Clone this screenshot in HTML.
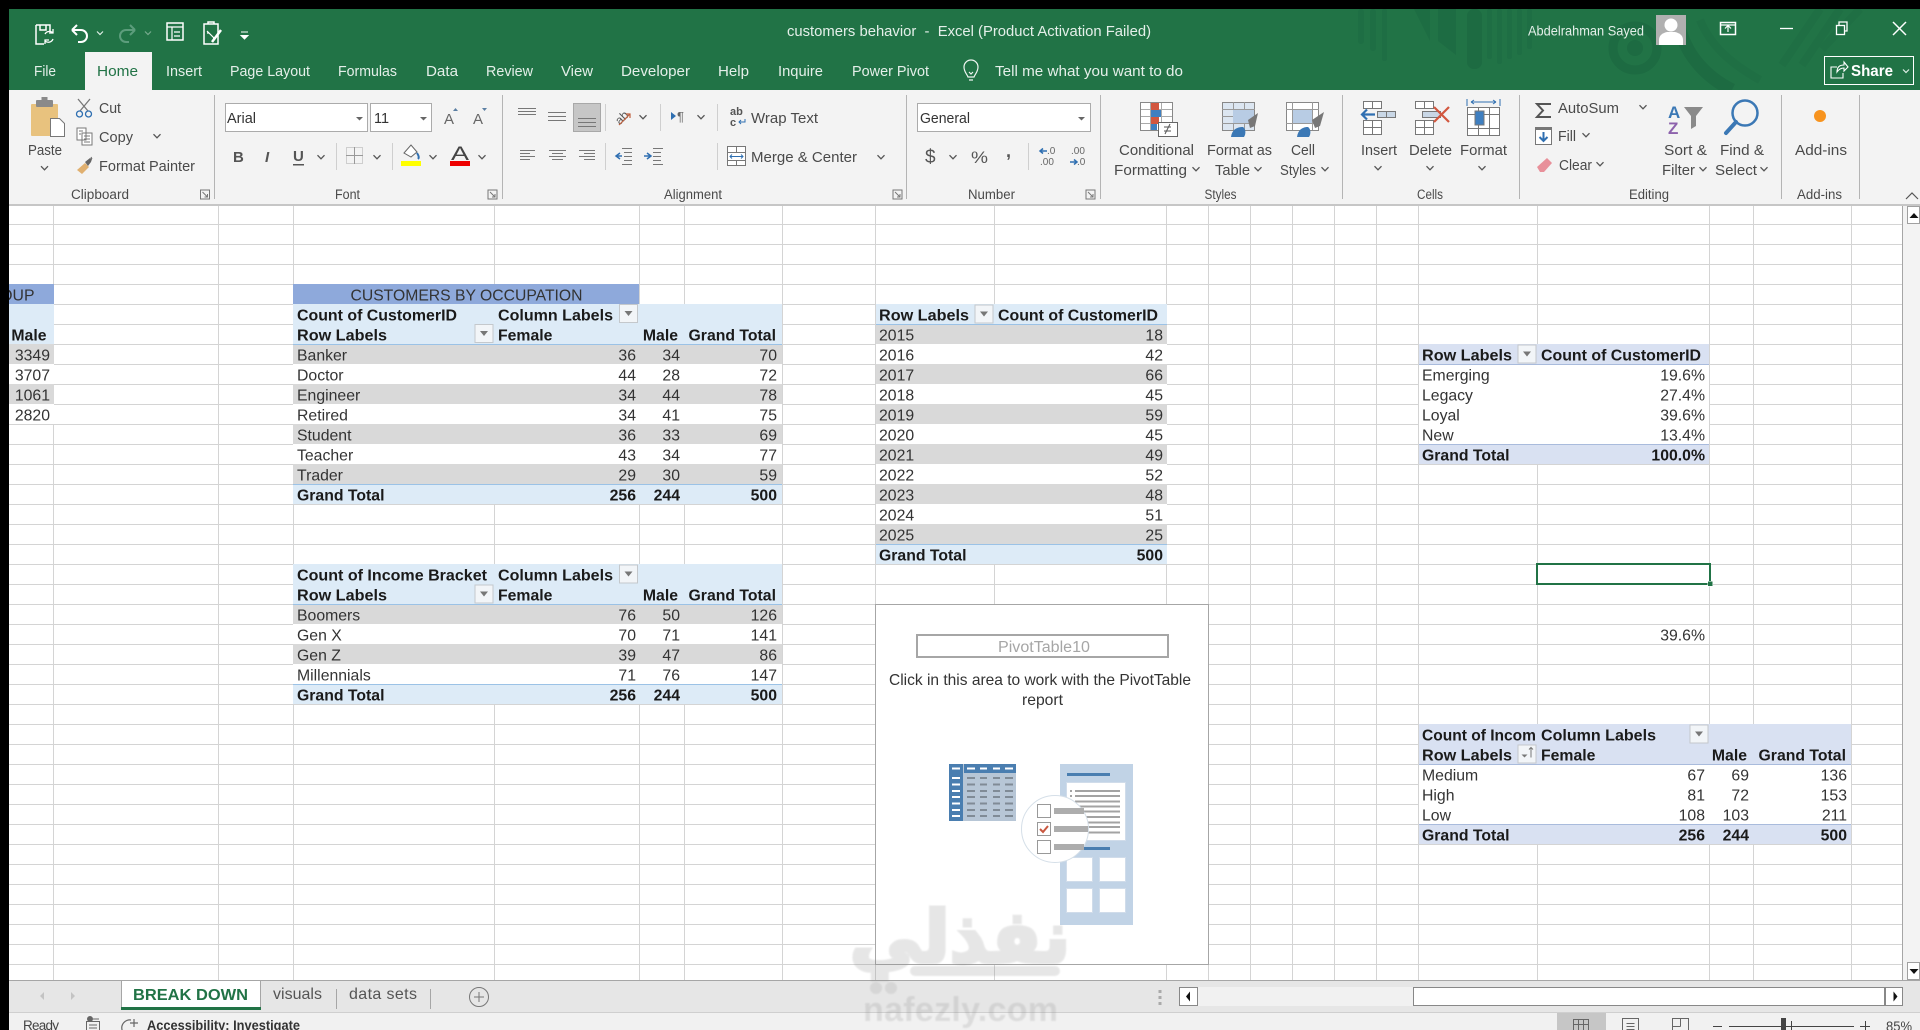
<!DOCTYPE html>
<html><head><meta charset="utf-8"><title>customers behavior - Excel</title>
<style>
html,body{margin:0;padding:0;background:#fff;width:1920px;height:1030px;overflow:hidden}
svg{display:block}
text{font-family:"Liberation Sans",Arial,sans-serif;white-space:pre}
.r{font-size:14.5px;fill:#4a4a4a}
.l{font-size:13.5px;fill:#4a4a4a}
.w{font-size:14.5px;fill:#e4efe9}
.c{font-size:15.8px;fill:#333;transform:translateY(.7px)}
.b{font-size:15.8px;font-weight:bold;fill:#1a1a1a;transform:translateY(.7px)}
.e{text-anchor:end}
.crisp{shape-rendering:crispEdges}
</style></head><body>
<svg xmlns="http://www.w3.org/2000/svg" width="1920" height="1030" viewBox="0 0 1920 1030">
<defs>
<path id="ch" d="M-3.5-1.8 0 1.8 3.5-1.8" fill="none" stroke="#555" stroke-width="1.3"/>
<path id="chw" d="M-3-1.5 0 1.5 3-1.5" fill="none" stroke="#dfeee6" stroke-width="1.2"/>
<g id="fb"><rect x=".5" y=".5" width="18" height="18" fill="#f2f5f8" stroke="#c4c8cc"/><path d="M5.5 7h8l-4 5z" fill="#777"/></g>
<path id="la" d="M0 0h9v9h-9z M2 2l5 5M7 4v3h-3" fill="none" stroke="#777"/>
</defs>

<!-- sheet background and gridlines -->
<rect x="0" y="205" width="1920" height="775" fill="#fff"/>
<path class="crisp" stroke="#d4d4d4" stroke-width="1" fill="none" d="M0 224.500H1902M0 244.500H1902M0 264.500H1902M0 284.500H1902M0 304.500H1902M0 324.500H1902M0 344.500H1902M0 364.500H1902M0 384.500H1902M0 404.500H1902M0 424.500H1902M0 444.500H1902M0 464.500H1902M0 484.500H1902M0 504.500H1902M0 524.500H1902M0 544.500H1902M0 564.500H1902M0 584.500H1902M0 604.500H1902M0 624.500H1902M0 644.500H1902M0 664.500H1902M0 684.500H1902M0 704.500H1902M0 724.500H1902M0 744.500H1902M0 764.500H1902M0 784.500H1902M0 804.500H1902M0 824.500H1902M0 844.500H1902M0 864.500H1902M0 884.500H1902M0 904.500H1902M0 924.500H1902M0 944.500H1902M0 964.500H1902
M53.500 205V980M218.500 205V980M293.500 205V980M494.500 205V980M639.500 205V980M684.500 205V980M782.500 205V980M875.500 205V980M994.500 205V980M1166.500 205V980M1208.500 205V980M1250.500 205V980M1292.500 205V980M1334.500 205V980M1376.500 205V980M1418.500 205V980M1537.500 205V980M1709.500 205V980M1753.500 205V980M1851.500 205V980"/>

<!-- left fragment -->
<g class="crisp">
<rect x="9" y="284" width="45" height="20" fill="#8ea9db"/>
<rect x="9" y="304" width="45" height="40" fill="#ddebf7"/>
<rect x="9" y="344" width="45" height="20" fill="#d9d9d9"/>
<rect x="9" y="364" width="45" height="20" fill="#fff"/>
<rect x="9" y="384" width="45" height="20" fill="#d9d9d9"/>
<rect x="9" y="404" width="45" height="20" fill="#fff"/>
</g>
<text class="c e" x="34.500" y="300">GROUP</text>
<text class="b e" x="46.500" y="340">Male</text>
<text class="c e" x="50" y="360">3349</text>
<text class="c e" x="50" y="380">3707</text>
<text class="c e" x="50" y="400">1061</text>
<text class="c e" x="50" y="420">2820</text>

<!-- occupation pivot -->
<g class="crisp">
<rect x="293" y="284" width="346" height="20" fill="#8ea9db"/>
<rect x="293" y="304" width="489" height="40" fill="#ddebf7"/>
<rect x="293" y="344" width="489" height="20" fill="#d9d9d9"/>
<rect x="293" y="364" width="489" height="20" fill="#fff"/>
<rect x="293" y="384" width="489" height="20" fill="#d9d9d9"/>
<rect x="293" y="404" width="489" height="20" fill="#fff"/>
<rect x="293" y="424" width="489" height="20" fill="#d9d9d9"/>
<rect x="293" y="444" width="489" height="20" fill="#fff"/>
<rect x="293" y="464" width="489" height="20" fill="#d9d9d9"/>
<rect x="293" y="484" width="489" height="20" fill="#ddebf7"/>
<path d="M293 344.500H782M293 484.500H782" stroke="#9bc2e6"/>
</g>
<text class="c" x="350.500" y="300" textLength="232" lengthAdjust="spacingAndGlyphs">CUSTOMERS BY OCCUPATION</text>
<text class="b" x="297" y="320" textLength="160" lengthAdjust="spacingAndGlyphs">Count of CustomerID</text>
<text class="b" x="498" y="320" textLength="115" lengthAdjust="spacingAndGlyphs">Column Labels</text>
<use href="#fb" x="619" y="304"/>
<text class="b" x="297" y="340" textLength="90" lengthAdjust="spacingAndGlyphs">Row Labels</text>
<use href="#fb" x="474.500" y="324"/>
<text class="b" x="498" y="340">Female</text>
<text class="b e" x="678" y="340">Male</text>
<text class="b e" x="776" y="340">Grand Total</text>
<text class="c" x="297" y="360">Banker</text><text class="c e" x="636" y="360">36</text><text class="c e" x="680" y="360">34</text><text class="c e" x="777" y="360">70</text>
<text class="c" x="297" y="380">Doctor</text><text class="c e" x="636" y="380">44</text><text class="c e" x="680" y="380">28</text><text class="c e" x="777" y="380">72</text>
<text class="c" x="297" y="400">Engineer</text><text class="c e" x="636" y="400">34</text><text class="c e" x="680" y="400">44</text><text class="c e" x="777" y="400">78</text>
<text class="c" x="297" y="420">Retired</text><text class="c e" x="636" y="420">34</text><text class="c e" x="680" y="420">41</text><text class="c e" x="777" y="420">75</text>
<text class="c" x="297" y="440">Student</text><text class="c e" x="636" y="440">36</text><text class="c e" x="680" y="440">33</text><text class="c e" x="777" y="440">69</text>
<text class="c" x="297" y="460">Teacher</text><text class="c e" x="636" y="460">43</text><text class="c e" x="680" y="460">34</text><text class="c e" x="777" y="460">77</text>
<text class="c" x="297" y="480">Trader</text><text class="c e" x="636" y="480">29</text><text class="c e" x="680" y="480">30</text><text class="c e" x="777" y="480">59</text>
<text class="b" x="297" y="500">Grand Total</text><text class="b e" x="636" y="500">256</text><text class="b e" x="680" y="500">244</text><text class="b e" x="777" y="500">500</text>

<!-- income bracket pivot -->
<g class="crisp">
<rect x="293" y="564" width="489" height="40" fill="#ddebf7"/>
<rect x="293" y="604" width="489" height="20" fill="#d9d9d9"/>
<rect x="293" y="624" width="489" height="20" fill="#fff"/>
<rect x="293" y="644" width="489" height="20" fill="#d9d9d9"/>
<rect x="293" y="664" width="489" height="20" fill="#fff"/>
<rect x="293" y="684" width="489" height="20" fill="#ddebf7"/>
<path d="M293 604.500H782M293 684.500H782" stroke="#9bc2e6"/>
</g>
<text class="b" x="297" y="580" textLength="190" lengthAdjust="spacingAndGlyphs">Count of Income Bracket</text>
<text class="b" x="498" y="580" textLength="115" lengthAdjust="spacingAndGlyphs">Column Labels</text>
<use href="#fb" x="619" y="564.500"/>
<text class="b" x="297" y="600" textLength="90" lengthAdjust="spacingAndGlyphs">Row Labels</text>
<use href="#fb" x="474.500" y="584.500"/>
<text class="b" x="498" y="600">Female</text>
<text class="b e" x="678" y="600">Male</text>
<text class="b e" x="776" y="600">Grand Total</text>
<text class="c" x="297" y="620">Boomers</text><text class="c e" x="636" y="620">76</text><text class="c e" x="680" y="620">50</text><text class="c e" x="777" y="620">126</text>
<text class="c" x="297" y="640">Gen X</text><text class="c e" x="636" y="640">70</text><text class="c e" x="680" y="640">71</text><text class="c e" x="777" y="640">141</text>
<text class="c" x="297" y="660">Gen Z</text><text class="c e" x="636" y="660">39</text><text class="c e" x="680" y="660">47</text><text class="c e" x="777" y="660">86</text>
<text class="c" x="297" y="680">Millennials</text><text class="c e" x="636" y="680">71</text><text class="c e" x="680" y="680">76</text><text class="c e" x="777" y="680">147</text>
<text class="b" x="297" y="700">Grand Total</text><text class="b e" x="636" y="700">256</text><text class="b e" x="680" y="700">244</text><text class="b e" x="777" y="700">500</text>

<!-- years pivot -->
<g class="crisp">
<rect x="876" y="304" width="291" height="20" fill="#ddebf7"/>
<rect x="876" y="324" width="291" height="20" fill="#d9d9d9"/>
<rect x="876" y="344" width="291" height="20" fill="#fff"/>
<rect x="876" y="364" width="291" height="20" fill="#d9d9d9"/>
<rect x="876" y="384" width="291" height="20" fill="#fff"/>
<rect x="876" y="404" width="291" height="20" fill="#d9d9d9"/>
<rect x="876" y="424" width="291" height="20" fill="#fff"/>
<rect x="876" y="444" width="291" height="20" fill="#d9d9d9"/>
<rect x="876" y="464" width="291" height="20" fill="#fff"/>
<rect x="876" y="484" width="291" height="20" fill="#d9d9d9"/>
<rect x="876" y="504" width="291" height="20" fill="#fff"/>
<rect x="876" y="524" width="291" height="20" fill="#d9d9d9"/>
<rect x="876" y="544" width="291" height="20" fill="#ddebf7"/>
<path d="M876 324.500H1167M876 544.500H1167" stroke="#9bc2e6"/>
</g>
<text class="b" x="879" y="320" textLength="90" lengthAdjust="spacingAndGlyphs">Row Labels</text>
<use href="#fb" x="974.500" y="304.500"/>
<text class="b" x="998" y="320" textLength="160" lengthAdjust="spacingAndGlyphs">Count of CustomerID</text>
<text class="c" x="879" y="340">2015</text><text class="c e" x="1163" y="340">18</text>
<text class="c" x="879" y="360">2016</text><text class="c e" x="1163" y="360">42</text>
<text class="c" x="879" y="380">2017</text><text class="c e" x="1163" y="380">66</text>
<text class="c" x="879" y="400">2018</text><text class="c e" x="1163" y="400">45</text>
<text class="c" x="879" y="420">2019</text><text class="c e" x="1163" y="420">59</text>
<text class="c" x="879" y="440">2020</text><text class="c e" x="1163" y="440">45</text>
<text class="c" x="879" y="460">2021</text><text class="c e" x="1163" y="460">49</text>
<text class="c" x="879" y="480">2022</text><text class="c e" x="1163" y="480">52</text>
<text class="c" x="879" y="500">2023</text><text class="c e" x="1163" y="500">48</text>
<text class="c" x="879" y="520">2024</text><text class="c e" x="1163" y="520">51</text>
<text class="c" x="879" y="540">2025</text><text class="c e" x="1163" y="540">25</text>
<text class="b" x="879" y="560">Grand Total</text><text class="b e" x="1163" y="560">500</text>

<!-- segment pivot -->
<g class="crisp">
<rect x="1419" y="344" width="290" height="20" fill="#d9e1f2"/>
<rect x="1419" y="364" width="290" height="80" fill="#fff"/>
<rect x="1419" y="444" width="290" height="20" fill="#d9e1f2"/>
<path d="M1419 364.500H1709M1419 444.500H1709" stroke="#a9bbdc"/>
</g>
<text class="b" x="1422" y="360" textLength="90" lengthAdjust="spacingAndGlyphs">Row Labels</text>
<use href="#fb" x="1517.500" y="344.500"/>
<text class="b" x="1541" y="360" textLength="160" lengthAdjust="spacingAndGlyphs">Count of CustomerID</text>
<text class="c" x="1422" y="380">Emerging</text><text class="c e" x="1705" y="380">19.6%</text>
<text class="c" x="1422" y="400">Legacy</text><text class="c e" x="1705" y="400">27.4%</text>
<text class="c" x="1422" y="420">Loyal</text><text class="c e" x="1705" y="420">39.6%</text>
<text class="c" x="1422" y="440">New</text><text class="c e" x="1705" y="440">13.4%</text>
<text class="b" x="1422" y="460">Grand Total</text><text class="b e" x="1705" y="460">100.0%</text>

<!-- selected cell -->
<rect class="crisp" x="1537" y="564" width="173" height="20" fill="#fff" stroke="#217346" stroke-width="2"/>
<rect class="crisp" x="1707.500" y="581" width="5" height="5" fill="#217346" stroke="#fff" stroke-width=".5"/>
<text class="c e" x="1705" y="640">39.6%</text>

<!-- income pivot right -->
<g class="crisp">
<rect x="1419" y="724" width="432" height="40" fill="#d9e1f2"/>
<rect x="1419" y="764" width="432" height="60" fill="#fff"/>
<rect x="1419" y="824" width="432" height="20" fill="#d9e1f2"/>
<path d="M1419 764.500H1851M1419 824.500H1851" stroke="#a9bbdc"/>
</g>
<text class="b" x="1422" y="740" textLength="114" lengthAdjust="spacingAndGlyphs">Count of Incom</text>
<text class="b" x="1541" y="740" textLength="115" lengthAdjust="spacingAndGlyphs">Column Labels</text>
<use href="#fb" x="1689.500" y="724.500"/>
<text class="b" x="1422" y="760" textLength="90" lengthAdjust="spacingAndGlyphs">Row Labels</text>
<g transform="translate(1517.500 744.500)"><rect x=".5" y=".5" width="18" height="18" fill="#f2f5f8" stroke="#c4c8cc"/><path d="M4 10h6l-3 3z" fill="#777"/><path d="M13.500 3v10M11.500 5l2-2 2 2" fill="none" stroke="#777"/></g>
<text class="b" x="1541" y="760">Female</text>
<text class="b e" x="1747" y="760">Male</text>
<text class="b e" x="1846" y="760">Grand Total</text>
<text class="c" x="1422" y="780">Medium</text><text class="c e" x="1705" y="780">67</text><text class="c e" x="1749" y="780">69</text><text class="c e" x="1847" y="780">136</text>
<text class="c" x="1422" y="800">High</text><text class="c e" x="1705" y="800">81</text><text class="c e" x="1749" y="800">72</text><text class="c e" x="1847" y="800">153</text>
<text class="c" x="1422" y="820">Low</text><text class="c e" x="1705" y="820">108</text><text class="c e" x="1749" y="820">103</text><text class="c e" x="1847" y="820">211</text>
<text class="b" x="1422" y="840">Grand Total</text><text class="b e" x="1705" y="840">256</text><text class="b e" x="1749" y="840">244</text><text class="b e" x="1847" y="840">500</text>

<!-- placeholder pivot -->
<rect class="crisp" x="875.500" y="604.500" width="333" height="360" fill="#fff" stroke="#a6a6a6"/>
<rect class="crisp" x="917" y="635" width="251" height="22" fill="#fff" stroke="#a6a6a6" stroke-width="2"/>
<text x="998" y="652" style="font-size:15.5px;fill:#a6a6a6" textLength="92" lengthAdjust="spacingAndGlyphs">PivotTable10</text>
<text x="889" y="685" style="font-size:15.8px;fill:#333" textLength="302" lengthAdjust="spacingAndGlyphs">Click in this area to work with the PivotTable</text>
<text x="1022" y="705" style="font-size:15.8px;fill:#333" textLength="41" lengthAdjust="spacingAndGlyphs">report</text>
<!-- illustration -->
<g class="crisp">
<rect x="949" y="764" width="67" height="57" fill="#b7c6d6"/>
<rect x="949" y="764" width="14" height="57" fill="#4a7eb0"/>
<rect x="964" y="764" width="52" height="9" fill="#4a7eb0"/>
<path stroke="#fff" stroke-width="2" d="M952 768.500h8M967 768.500h8M980 768.500h7M993 768.500h7M1005 768.500h8M952 778h8M952 784.500h8M952 791h8M952 797h8M952 803.500h8M952 810h8M952 816h8"/>
<path stroke="#808b96" stroke-width="2" d="M967 778h8M980 778h7M993 778h7M1005 778h8M967 784.500h8M980 784.500h7M993 784.500h7M1005 784.500h8M967 791h8M980 791h7M993 791h7M1005 791h8M967 797h8M980 797h7M993 797h7M1005 797h8M967 803.500h8M980 803.500h7M993 803.500h7M1005 803.500h8M967 810h8M980 810h7M993 810h7M1005 810h8M967 816h8M980 816h7M993 816h7M1005 816h8"/>
<rect x="1060" y="764" width="73" height="161" fill="#c1d3e6"/>
<rect x="1067" y="773" width="43" height="3" fill="#4a7eb0"/>
<rect x="1066.500" y="782.500" width="59" height="58" fill="#fff" stroke="#d0dcea"/>
<path stroke="#a3a3a3" stroke-width="2" d="M1075 791h45M1075 796h45M1075 801.500h45M1075 806.500h45M1075 811.500h45M1075 817h45M1075 822.500h45M1075 827h45M1075 832.500h45M1070 791h2M1070 796h2M1070 801h2"/>
<rect x="1067" y="847" width="43" height="3" fill="#4a7eb0"/>
<rect x="1066.500" y="857.500" width="26" height="24" fill="#fff" stroke="#d0dcea"/>
<rect x="1099.500" y="857.500" width="26" height="24" fill="#fff" stroke="#d0dcea"/>
<rect x="1066.500" y="888.500" width="26" height="24" fill="#fff" stroke="#d0dcea"/>
<rect x="1099.500" y="888.500" width="26" height="24" fill="#fff" stroke="#d0dcea"/>
</g>
<circle cx="1055" cy="829" r="33.500" fill="#fff" stroke="#d5dfe8"/>
<rect x="1037.500" y="804.500" width="13" height="13" fill="#fff" stroke="#999"/>
<rect x="1037.500" y="822.500" width="13" height="13" fill="#fff" stroke="#999"/>
<rect x="1037.500" y="840.500" width="13" height="13" fill="#fff" stroke="#999"/>
<path d="M1040 829l3 3 5-6" fill="none" stroke="#c9573f" stroke-width="2"/>
<rect x="1054" y="808" width="30" height="6" fill="#adadad"/>
<rect x="1054" y="826" width="34" height="6" fill="#adadad"/>
<rect x="1054" y="844" width="30" height="6" fill="#adadad"/>

<!-- right of grid -->
<rect class="crisp" x="1902" y="205" width="1" height="775" fill="#a6a6a6"/>
<rect class="crisp" x="1903" y="205" width="17" height="775" fill="#f3f3f3"/>
<rect class="crisp" x="1907.500" y="206.500" width="12" height="17" fill="#fff" stroke="#a0a0a0"/>
<path d="M1914 213l4.500 5h-9z" fill="#111"/>
<rect class="crisp" x="1907.500" y="962.500" width="12" height="17" fill="#fff" stroke="#a0a0a0"/>
<path d="M1914 974l4.500-5h-9z" fill="#111"/>

<!-- sheet bar -->
<rect class="crisp" x="0" y="980" width="1920" height="32" fill="#e6e6e6"/>
<rect class="crisp" x="0" y="980" width="1920" height="1" fill="#a6a6a6"/>
<rect class="crisp" x="0" y="1012" width="1920" height="1" fill="#cfcfcf"/>
<rect class="crisp" x="0" y="1013" width="1920" height="17" fill="#f1f1f1"/>
<path d="M44 992l-4 4 4 4z M71 992l4 4-4 4z" fill="#c3c3c3"/>
<path class="crisp" d="M121.500 1008V980.500H260.500V1008" fill="#fff" stroke="#a6a6a6"/>
<rect class="crisp" x="122" y="981" width="138" height="28" fill="#fff"/>
<rect class="crisp" x="121" y="1007" width="140" height="3" fill="#217346"/>
<text x="133" y="1000" style="font-size:16px;font-weight:bold;fill:#217346" textLength="115" lengthAdjust="spacingAndGlyphs">BREAK DOWN</text>
<text x="273" y="999" style="font-size:16px;fill:#555" textLength="49" lengthAdjust="spacing">visuals</text>
<rect class="crisp" x="336" y="989" width="1" height="20" fill="#a6a6a6"/>
<text x="349" y="999" style="font-size:16px;fill:#555" textLength="68" lengthAdjust="spacing">data sets</text>
<rect class="crisp" x="430" y="989" width="1" height="20" fill="#a6a6a6"/>
<circle cx="479" cy="997" r="9.500" fill="none" stroke="#777"/>
<path d="M474 997h10M479 992v10" stroke="#777"/>
<path class="crisp" d="M1160 990v3M1160 996v3M1160 1002v3" stroke="#aaa" stroke-width="3"/>
<rect class="crisp" x="1197" y="987" width="216" height="19" fill="#f1f1f1"/>
<rect class="crisp" x="1179.500" y="987.500" width="18" height="18" fill="#fff" stroke="#888"/>
<path d="M1186 996.500l4-5v10z" fill="#111"/>
<rect class="crisp" x="1413.500" y="987.500" width="471" height="18" fill="#fff" stroke="#888"/>
<rect class="crisp" x="1885.500" y="987.500" width="17" height="18" fill="#fff" stroke="#888"/>
<path d="M1897.500 996.500l-4-5v10z" fill="#111"/>

<!-- status bar -->
<text x="23" y="1030" style="font-size:13.5px;fill:#444" textLength="36">Ready</text>
<g fill="none" stroke="#666"><rect x="86.500" y="1021.500" width="13" height="10"/><path d="M89 1025h8M89 1028h8"/><circle cx="90" cy="1019" r="2.500" fill="#666"/><path d="M93 1019h6"/></g>
<path d="M131 1020a8 8 0 1 0 4 14M134 1019v8M130 1023h8" fill="none" stroke="#666" stroke-width="1.200"/>
<text x="147" y="1030" style="font-size:13.5px;font-weight:bold;fill:#333" textLength="153" lengthAdjust="spacingAndGlyphs">Accessibility: Investigate</text>
<rect class="crisp" x="1557" y="1013" width="49" height="17" fill="#c6c6c6"/>
<path class="crisp" d="M1573.500 1019.500h15v11h-15zM1578.500 1019.500v11M1583.500 1019.500v11M1573.500 1024.500h15" fill="none" stroke="#666"/>
<path class="crisp" d="M1622.500 1018.500h16v12h-16zM1626.500 1023.500h8M1626.500 1026.500h8M1626.500 1029.500h8" fill="none" stroke="#666"/>
<path class="crisp" d="M1672.500 1018.500h16v12h-16zM1680.500 1018.500v8M1672.500 1026.500h8" fill="none" stroke="#666"/>
<path class="crisp" d="M1713 1026.500h9M1729 1026.500h125M1860 1026.500h10M1865.500 1021v9M1791.500 1021v9" stroke="#444" fill="none"/>
<rect class="crisp" x="1781" y="1018" width="5" height="12" fill="#444"/>
<text x="1886" y="1031" style="font-size:14px;fill:#444" textLength="26" lengthAdjust="spacingAndGlyphs">85%</text>

<!-- title bar / tabs -->
<rect class="crisp" x="0" y="9" width="1920" height="81" fill="#217346"/>
<g fill="#1d6b42">
<rect x="1358" y="9" width="6" height="35" rx="3" opacity=".6"/><rect x="1370" y="9" width="6" height="42" rx="3" opacity=".6"/><rect x="1382" y="9" width="5" height="52" rx="2" opacity=".6"/>
<path d="M1414 9h16v32z" opacity=".7"/>
<path d="M1438 9h18v46l-18-14z" opacity=".9"/>
<rect x="1467" y="9" width="15" height="60" rx="7"/>
<rect x="1487" y="9" width="5" height="50" rx="2" opacity=".6"/><rect x="1497" y="9" width="5" height="55" rx="2" opacity=".6"/><rect x="1507" y="9" width="5" height="50" rx="2" opacity=".6"/><rect x="1517" y="9" width="5" height="46" rx="2" opacity=".6"/><rect x="1527" y="9" width="5" height="40" rx="2" opacity=".6"/>
</g>
<circle cx="1635" cy="48" r="22" fill="none" stroke="#1d6b42" stroke-width="9"/>
<circle cx="1635" cy="48" r="8" fill="#1d6b42"/>
<path d="M1680 30c8 28 28 48 52 60" fill="none" stroke="#1d6b42" stroke-width="13"/>
<path d="M1700 20c10 24 28 42 60 60M1820 9l-38 56M1840 9l-38 56M1860 9l-38 40" fill="none" stroke="#1d6b42" stroke-width="8" opacity=".5"/>

<!-- QAT -->
<g fill="none" stroke="#fff" stroke-width="1.500">
<path d="M36 25h14v7M36 25v19h8M40 25v5h6v-5"/><path d="M45 34a5 5 0 0 1 8-1M53 39a5 5 0 0 1-8 2M53 29v4h-4M45 44v-4h4" stroke-width="1.300"/>
<path d="M72 30h9a6 6 0 0 1 0 12h-3M72 30l5-5M72 30l5 5" stroke-width="2"/>
<path d="M135 30h-9a6 6 0 0 0 0 12h3M135 30l-5-5M135 30l-5 5" stroke="#5c9d7c" stroke-width="2"/>
<rect x="167" y="23" width="16" height="17"/><path d="M167 27h16M172 27v13M174 32h6M174 36h6" stroke-width="1.200"/>
<rect x="204" y="24" width="14" height="20"/><path d="M208 24v-2h6v2" /><path d="M207 31l8 8M207 33h2M213 38h2" stroke-width="1.200"/><path d="M212 42l9-12" stroke-width="2.500"/>
</g>
<use href="#chw" x="100" y="33"/><g opacity=".45"><use href="#chw" x="148" y="33"/></g>
<path d="M241 32h7M241 35.500l3.500 3.500 3.500-3.500z" fill="#fff" stroke="#fff"/>

<text class="w" x="787" y="36" textLength="364" lengthAdjust="spacingAndGlyphs" style="font-size:15px">customers behavior  -  Excel (Product Activation Failed)</text>

<rect class="crisp" x="85" y="52" width="67" height="38" fill="#f3f3f3"/>
<text class="w" x="34" y="76" textLength="22" lengthAdjust="spacingAndGlyphs">File</text>
<text x="97" y="76" style="font-size:14.5px;fill:#217346" textLength="41" lengthAdjust="spacingAndGlyphs">Home</text>
<text class="w" x="166" y="76" textLength="36" lengthAdjust="spacingAndGlyphs">Insert</text>
<text class="w" x="230" y="76" textLength="80" lengthAdjust="spacingAndGlyphs">Page Layout</text>
<text class="w" x="338" y="76" textLength="59" lengthAdjust="spacingAndGlyphs">Formulas</text>
<text class="w" x="426" y="76" textLength="32" lengthAdjust="spacingAndGlyphs">Data</text>
<text class="w" x="486" y="76" textLength="47" lengthAdjust="spacingAndGlyphs">Review</text>
<text class="w" x="561" y="76" textLength="32" lengthAdjust="spacingAndGlyphs">View</text>
<text class="w" x="621" y="76" textLength="69" lengthAdjust="spacingAndGlyphs">Developer</text>
<text class="w" x="718" y="76" textLength="31" lengthAdjust="spacingAndGlyphs">Help</text>
<text class="w" x="778" y="76" textLength="45" lengthAdjust="spacingAndGlyphs">Inquire</text>
<text class="w" x="852" y="76" textLength="77" lengthAdjust="spacingAndGlyphs">Power Pivot</text>
<path d="M968 77c-1-3-4-5-4-10a7 7 0 0 1 14 0c0 5-3 7-4 10zM969 80h4M969 72l2 2 2-2" fill="none" stroke="#eef5f1" stroke-width="1.200"/>
<text class="w" x="995" y="76" textLength="188" lengthAdjust="spacingAndGlyphs">Tell me what you want to do</text>

<text class="w" x="1528" y="35.500" textLength="116" lengthAdjust="spacingAndGlyphs" style="font-size:14px">Abdelrahman Sayed</text>
<rect class="crisp" x="1656" y="15" width="30" height="30" fill="#b0b0b0"/>
<circle cx="1671" cy="25" r="6.500" fill="#fff"/><path d="M1659 45v-5c0-5 4-7 8-8h8c4 1 8 3 8 8v5z" fill="#fff"/>
<g fill="none" stroke="#fff">
<rect x="1720.500" y="22.500" width="15" height="12" stroke-width="1.500"/><path d="M1728 32v-6M1725 28.500l3-3 3 3M1720 25h16" stroke-width="1.200"/>
<path d="M1780 28.500h13" stroke-width="1.300"/>
<rect x="1836.500" y="25.500" width="8" height="9" stroke-width="1.300"/><path d="M1839 25v-3h8v9h-2" stroke-width="1.300"/>
<path d="M1893 22l13 13M1906 22l-13 13" stroke-width="1.500"/>
<rect class="crisp" x="1824.500" y="56.500" width="89" height="28"/>
<path d="M1837 67h-6v11h12v-5M1837 72c0-5 3-7 7-7v-3l4 5-4 4v-3c-3 0-5 1-7 4z" stroke-width="1.100"/>
</g>
<text x="1851" y="76" style="font-size:16px;font-weight:bold;fill:#fff" textLength="42" lengthAdjust="spacingAndGlyphs">Share</text>
<use href="#chw" x="1906" y="71"/>

<!-- ribbon -->
<rect class="crisp" x="0" y="90" width="1920" height="114" fill="#f3f3f3"/>
<rect class="crisp" x="0" y="204" width="1920" height="2" fill="#c6c6c6"/>
<rect class="crisp" x="85" y="88" width="67" height="3" fill="#f3f3f3"/>
<path class="crisp" stroke="#b4b4b4" d="M214.500 95V199M502.500 95V199M906.500 95V199M1100.500 95V199M1342.500 95V199M1519.500 95V199M1781.500 95V199M1859.500 95V199"/>
<path class="crisp" stroke="#cfcfcf" d="M336.500 143V170M392.500 143V170M605.500 104V131M605.500 143V170M660.500 104V131M717.500 104V131M717.500 143V170M1028.500 143V170"/>

<!-- clipboard group -->
<rect x="31" y="104" width="27" height="32" rx="1" fill="#e8c27e"/>
<rect x="36" y="100" width="17" height="7" rx="1" fill="#8a8a8a"/><rect x="41.500" y="97" width="6" height="4" fill="#8a8a8a"/>
<path d="M50.500 118.500h9l5 5v13h-14z" fill="#fff" stroke="#777"/>
<text class="r" x="28" y="155" textLength="34" lengthAdjust="spacingAndGlyphs">Paste</text>
<use href="#ch" x="44.500" y="168"/>
<g fill="none" stroke="#777" stroke-width="1.300"><path d="M78 99l10 12M90 99l-10 12"/></g>
<g fill="none" stroke="#2f6fb1" stroke-width="1.300"><circle cx="79.500" cy="114" r="3"/><circle cx="88.500" cy="114" r="3"/></g>
<text class="r" x="99" y="113" textLength="22" lengthAdjust="spacingAndGlyphs">Cut</text>
<path d="M77 128h9v12h-9zM82 133h10v12H82zM79 131h4M79 134h2M84 136h6M84 139h6M84 142h6" fill="#fff" stroke="#777"/>
<text class="r" x="99" y="142" textLength="34" lengthAdjust="spacingAndGlyphs">Copy</text>
<use href="#ch" x="157" y="136"/>
<path d="M77 170l8-7 4 4-7 7z" fill="#e0b070"/><path d="M85 162l5-4 2 1-1 3-3 4z" fill="#666"/><path d="M91 157l1 2" stroke="#666"/>
<text class="r" x="99" y="171" textLength="96" lengthAdjust="spacingAndGlyphs">Format Painter</text>
<text class="l" x="71" y="199" textLength="58" lengthAdjust="spacingAndGlyphs">Clipboard</text>
<use href="#la" x="200.500" y="190"/>

<!-- font group -->
<rect class="crisp" x="225.500" y="103.500" width="142" height="28" fill="#fff" stroke="#ababab"/>
<text x="227" y="123" style="font-size:14.5px;fill:#333" textLength="29" lengthAdjust="spacingAndGlyphs">Arial</text>
<path d="M356 117h7l-3.500 3.500z" fill="#666"/>
<rect class="crisp" x="370.500" y="103.500" width="61" height="28" fill="#fff" stroke="#ababab"/>
<text x="374" y="123" style="font-size:14.5px;fill:#333">11</text>
<path d="M420 117h7l-3.500 3.500z" fill="#666"/>
<text x="444" y="124" style="font-size:15px;fill:#666">A</text><path d="M453 111l2.500-3 2.500 3z" fill="#5b7fa3"/>
<text x="473" y="124" style="font-size:15px;fill:#666">A</text><path d="M482 108l2.500 3 2.500-3z" fill="#5b7fa3"/>
<text x="233" y="162" style="font-size:15px;font-weight:bold;fill:#555">B</text>
<text x="265" y="162" style="font-size:15px;font-style:italic;font-weight:bold;fill:#555">I</text>
<text x="293" y="161" style="font-size:15px;font-weight:bold;fill:#555">U</text><rect x="293" y="164" width="11" height="1.500" fill="#555"/>
<use href="#ch" x="321" y="157"/>
<g fill="none" stroke="#aaa" stroke-dasharray="1 1"><rect x="346.500" y="147.500" width="16" height="16"/><path d="M354.500 147v17M346 155.500h17" stroke-dasharray="none" stroke="#999"/></g>
<use href="#ch" x="377" y="157"/>
<path d="M404 153l7-8 6 7-6 5z" fill="#fff" stroke="#666"/><path d="M417 153c2 3 2 5 1 6" stroke="#2f6fb1" stroke-width="2" fill="none"/>
<rect x="401" y="161" width="20" height="5" fill="#ffff00"/>
<use href="#ch" x="433" y="157"/>
<text x="451" y="160" style="font-size:19px;fill:#444" textLength="18" lengthAdjust="spacingAndGlyphs">A</text>
<rect x="450" y="161" width="20" height="5" fill="#ee0000"/>
<use href="#ch" x="482" y="157"/>
<text class="l" x="335" y="199" textLength="25" lengthAdjust="spacingAndGlyphs">Font</text>
<use href="#la" x="488" y="190"/>

<!-- alignment -->
<path class="crisp" stroke="#777" d="M518 108.500h18M518 111.500h18M518 114.500h18"/>
<path class="crisp" stroke="#777" d="M548 112.500h18M548 116.500h18M548 120.500h18"/>
<rect class="crisp" x="573.500" y="103.500" width="27" height="28" fill="#c6c6c6" stroke="#a8a8a8"/>
<path class="crisp" stroke="#777" d="M578 118.500h18M578 122.500h18M578 126.500h18"/>
<text x="614" y="121" transform="rotate(-45 622 116)" style="font-size:12px;fill:#555">ab</text>
<path d="M619 125l11-11M630 118v-4h-4" fill="none" stroke="#c0603e" stroke-width="1.200"/>
<use href="#ch" x="643" y="117"/>
<path d="M671 112l5 4-5 4z" fill="#2f6fb1"/><text x="677" y="121" style="font-size:13px;fill:#666">¶</text>
<use href="#ch" x="701" y="117"/>
<text x="730" y="115" style="font-size:11px;font-weight:bold;fill:#555">ab</text>
<text x="730" y="126" style="font-size:11px;font-weight:bold;fill:#555">c</text>
<path d="M745 119v3h-6M741 120l-2 2 2 2" fill="none" stroke="#2f6fb1"/>
<text class="r" x="751" y="123" textLength="67" lengthAdjust="spacingAndGlyphs">Wrap Text</text>
<path class="crisp" stroke="#777" d="M520 150.500h15M520 153.500h10M520 156.500h15M520 159.500h10"/>
<path class="crisp" stroke="#777" d="M549 150.500h17M552 153.500h11M549 156.500h17M552 159.500h11"/>
<path class="crisp" stroke="#777" d="M579 150.500h16M584 153.500h11M579 156.500h16M584 159.500h11"/>
<path class="crisp" stroke="#777" d="M622 148.500h10M624 152.500h8M624 156.500h8M624 160.500h8M622 164.500h10"/>
<path d="M616 156h6M620 153l-4 3 4 3" fill="none" stroke="#2f6fb1" stroke-width="1.500"/>
<path class="crisp" stroke="#777" d="M653 148.500h10M653 152.500h8M653 156.500h8M653 160.500h8M653 164.500h10"/>
<path d="M644 156h6M647 153l4 3-4 3" fill="none" stroke="#2f6fb1" stroke-width="1.500"/>
<rect class="crisp" x="727.500" y="146.500" width="18" height="19" fill="#fff" stroke="#777"/>
<path class="crisp" stroke="#777" d="M727 152.500h19M727 160.500h19M736.500 146v6M736.500 160v6"/>
<path d="M730 156.500h13M732 154.500l-2 2 2 2M741 154.500l2 2-2 2" fill="none" stroke="#2f6fb1"/>
<text class="r" x="751" y="162" textLength="106" lengthAdjust="spacingAndGlyphs">Merge &amp; Center</text>
<use href="#ch" x="881" y="157"/>
<text class="l" x="664" y="199" textLength="58" lengthAdjust="spacingAndGlyphs">Alignment</text>
<use href="#la" x="893" y="190"/>

<!-- number -->
<rect class="crisp" x="917.500" y="103.500" width="173" height="28" fill="#fff" stroke="#ababab"/>
<text x="920" y="123" style="font-size:14.5px;fill:#333" textLength="50" lengthAdjust="spacingAndGlyphs">General</text>
<path d="M1078 117h7l-3.500 3.500z" fill="#666"/>
<text x="925" y="163" style="font-size:19px;fill:#555">$</text>
<use href="#ch" x="953" y="157"/>
<text x="971" y="163" style="font-size:17px;fill:#555" textLength="17" lengthAdjust="spacingAndGlyphs">%</text>
<text x="1006" y="157" style="font-size:18px;font-weight:bold;fill:#555">,</text>
<text x="1047" y="154" style="font-size:10px;fill:#666">.0</text><text x="1040" y="165" style="font-size:10px;fill:#666">.00</text>
<path d="M1040 151h7M1043 148.500l-3 2.500 3 2.500" fill="none" stroke="#2f6fb1" stroke-width="1.500"/>
<text x="1071" y="154" style="font-size:10px;fill:#666">.00</text><text x="1077" y="165" style="font-size:10px;fill:#666">.0</text>
<path d="M1070 162h7M1074 159.500l3 2.500-3 2.500" fill="none" stroke="#2f6fb1" stroke-width="1.500"/>
<text class="l" x="968" y="199" textLength="47" lengthAdjust="spacingAndGlyphs">Number</text>
<use href="#la" x="1086" y="190"/>

<!-- styles -->
<g class="crisp">
<rect x="1140.500" y="102.500" width="32" height="28" fill="#fff" stroke="#888"/>
<path stroke="#aaa" d="M1150.500 103v27M1161.500 103v27M1141 109.500h31M1141 116.500h31M1141 123.500h31"/>
<rect x="1151" y="103" width="8" height="7" fill="#d2573f"/><rect x="1151" y="110" width="10" height="7" fill="#3f7fc0"/><rect x="1151" y="117" width="8" height="7" fill="#d2573f"/><rect x="1151" y="124" width="6" height="6" fill="#3f7fc0"/>
<rect x="1158.500" y="122.500" width="19" height="14" fill="#fff" stroke="#666"/>
</g>
<path d="M1164 127h7M1164 131h7M1170 124l-5 10" stroke="#555" fill="none"/>
<text class="r" x="1119" y="155" textLength="75" lengthAdjust="spacingAndGlyphs">Conditional</text>
<text class="r" x="1114" y="175" textLength="73" lengthAdjust="spacingAndGlyphs">Formatting</text>
<use href="#ch" x="1196" y="169"/>
<g class="crisp"><rect x="1222.500" y="102.500" width="32" height="28" fill="#dce6f1" stroke="#888"/>
<path stroke="#999" d="M1222 109.500h33M1222 116.500h33M1222 123.500h33M1233.500 102v28M1244.500 102v28"/><rect x="1233" y="110" width="21" height="13" fill="#b8cce4"/></g>
<path d="M1248 120l10-7-3 13-5 2z" fill="#777"/><path d="M1231 137c1-7 5-10 12-10 3 2 3 7 1 10z" fill="#3b78b5"/>
<text class="r" x="1207" y="155" textLength="65" lengthAdjust="spacingAndGlyphs">Format as</text>
<text class="r" x="1215" y="175" textLength="35" lengthAdjust="spacingAndGlyphs">Table</text>
<use href="#ch" x="1258" y="169"/>
<g class="crisp"><rect x="1286.500" y="102.500" width="32" height="28" fill="#fff" stroke="#888"/>
<rect x="1292" y="109" width="20" height="14" fill="#b8cce4"/><path stroke="#999" d="M1286 109.500h33M1286 123.500h33M1292.500 102v28M1312.500 102v28"/></g>
<path d="M1312 120l12-8-4 14-5 2z" fill="#777"/><path d="M1297 137c1-7 5-10 11-10 3 2 3 7 1 10z" fill="#3b78b5"/>
<text class="r" x="1291" y="155" textLength="24" lengthAdjust="spacingAndGlyphs">Cell</text>
<text class="r" x="1280" y="175" textLength="36" lengthAdjust="spacingAndGlyphs">Styles</text>
<use href="#ch" x="1325" y="169"/>
<text class="l" x="1204.500" y="199" textLength="32" lengthAdjust="spacingAndGlyphs">Styles</text>

<!-- cells -->
<g class="crisp" fill="#fff" stroke="#777">
<path d="M1363.500 101.500h18v7h-18zM1372.500 101.500v7M1363.500 120.500h18v14h-18zM1372.500 120.500v14M1363.500 127.500h18"/>
<rect x="1377.500" y="111.500" width="18" height="6" fill="#c9d7e6"/><path d="M1386.500 111.500v6"/>
<path d="M1415.500 101.500h18v7h-18zM1424.500 101.500v7M1415.500 120.500h18v14h-18zM1424.500 120.500v14M1415.500 127.500h18"/>
<rect x="1422.500" y="111.500" width="18" height="6" fill="#c9d7e6"/>
<rect x="1467.500" y="107.500" width="32" height="28"/><path d="M1478.500 107v28M1489.500 107v28M1467 114.500h33M1467 128.500h33"/>
<rect x="1475" y="111" width="9" height="14" fill="#3f7fc0"/>
</g>
<path d="M1375 114.500h-13M1367 109.500l-5 5 5 5" fill="none" stroke="#2f6fb1" stroke-width="2.200"/>
<path d="M1434 107l15 15M1449 107l-15 15" stroke="#d2573f" stroke-width="2.200"/>
<path d="M1467 99v7M1500 99v7M1471 102h25M1471 102l3-2M1471 102l3 2M1496 102l-3-2M1496 102l-3 2" stroke="#2f6fb1" fill="none"/>
<text class="r" x="1361" y="155" textLength="36" lengthAdjust="spacingAndGlyphs">Insert</text>
<use href="#ch" x="1378" y="168"/>
<text class="r" x="1409" y="155" textLength="43" lengthAdjust="spacingAndGlyphs">Delete</text>
<use href="#ch" x="1430" y="168"/>
<text class="r" x="1460" y="155" textLength="47" lengthAdjust="spacingAndGlyphs">Format</text>
<use href="#ch" x="1482" y="168"/>
<text class="l" x="1417" y="199" textLength="26" lengthAdjust="spacingAndGlyphs">Cells</text>

<!-- editing -->
<path d="M1551 104h-14l6 6.500-6 6.500h14" fill="none" stroke="#555" stroke-width="2"/>
<text class="r" x="1558" y="113" textLength="61" lengthAdjust="spacingAndGlyphs">AutoSum</text>
<use href="#ch" x="1643" y="107"/>
<rect class="crisp" x="1535.500" y="127.500" width="16" height="17" fill="#fff" stroke="#777"/><rect class="crisp" x="1535" y="127" width="17" height="3" fill="#777"/>
<path d="M1543.500 132v9M1539.500 137l4 4 4-4" fill="none" stroke="#2f6fb1" stroke-width="2"/>
<text class="r" x="1558" y="141" textLength="18" lengthAdjust="spacingAndGlyphs">Fill</text>
<use href="#ch" x="1586" y="135"/>
<path d="M1537 167l10-9 5 5-8 9h-4z" fill="#e8909a"/>
<text class="r" x="1559" y="170" textLength="33" lengthAdjust="spacingAndGlyphs">Clear</text>
<use href="#ch" x="1600" y="164"/>
<text x="1668" y="118" style="font-size:17px;font-weight:bold;fill:#3b78b5">A</text>
<text x="1668" y="134" style="font-size:17px;font-weight:bold;fill:#8d62ac">Z</text>
<path d="M1684 107h19l-7 9v10l-5 3v-13z" fill="#8a8a8a"/>
<text class="r" x="1664" y="155" textLength="43" lengthAdjust="spacingAndGlyphs">Sort &amp;</text>
<text class="r" x="1662" y="175" textLength="33" lengthAdjust="spacingAndGlyphs">Filter</text>
<use href="#ch" x="1703" y="169"/>
<circle cx="1745" cy="113" r="12.500" fill="none" stroke="#3b78b5" stroke-width="2.500"/>
<path d="M1736 122l-10 11" stroke="#3b78b5" stroke-width="4" stroke-linecap="round"/>
<text class="r" x="1720" y="155" textLength="44" lengthAdjust="spacingAndGlyphs">Find &amp;</text>
<text class="r" x="1715" y="175" textLength="42" lengthAdjust="spacingAndGlyphs">Select</text>
<use href="#ch" x="1764" y="169"/>
<text class="l" x="1629" y="199" textLength="40" lengthAdjust="spacingAndGlyphs">Editing</text>

<!-- add-ins -->
<circle cx="1820" cy="116" r="6" fill="#f7931e"/>
<text class="r" x="1795" y="155" textLength="52" lengthAdjust="spacingAndGlyphs">Add-ins</text>
<text class="l" x="1797" y="199" textLength="45" lengthAdjust="spacingAndGlyphs">Add-ins</text>
<path d="M1906 199l6-6 6 6" fill="none" stroke="#555" stroke-width="1.200"/>

<!-- watermark -->
<g opacity=".2" fill="#999" style="filter:blur(.8px)">
<text x="960" y="962" text-anchor="middle" style="font-family:'DejaVu Sans',sans-serif;font-size:72px;font-weight:bold;fill:#888;stroke:#888;stroke-width:4" direction="rtl">نفذلي</text>
<rect x="910" y="966" width="150" height="10" rx="5" fill="#888"/>
<circle cx="876" cy="988" r="6"/><circle cx="891" cy="988" r="6"/>
<text x="863" y="1021" style="font-size:34px;font-weight:bold;fill:#888" textLength="195" lengthAdjust="spacing">nafezly.com</text>
</g>

<!-- black capture edges -->
<rect class="crisp" x="0" y="0" width="1920" height="9" fill="#000"/>
<rect class="crisp" x="0" y="0" width="9" height="1030" fill="#000"/>
</svg>
</body></html>
